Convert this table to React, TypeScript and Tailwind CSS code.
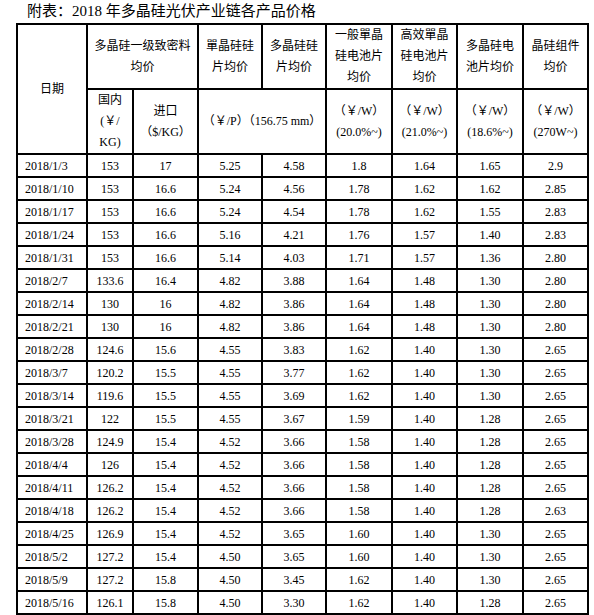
const rows: string[][] = [
  ['2018/1/3', '153', '17', '5.25', '4.58', '1.8', '1.64', '1.65', '2.9'],
  ['2018/1/10', '153', '16.6', '5.24', '4.56', '1.78', '1.62', '1.62', '2.85'],
  ['2018/1/17', '153', '16.6', '5.24', '4.54', '1.78', '1.62', '1.55', '2.83'],
  ['2018/1/24', '153', '16.6', '5.16', '4.21', '1.76', '1.57', '1.40', '2.83'],
  ['2018/1/31', '153', '16.6', '5.14', '4.03', '1.71', '1.57', '1.36', '2.80'],
  ['2018/2/7', '133.6', '16.4', '4.82', '3.88', '1.64', '1.48', '1.30', '2.80'],
  ['2018/2/14', '130', '16', '4.82', '3.86', '1.64', '1.48', '1.30', '2.80'],
  ['2018/2/21', '130', '16', '4.82', '3.86', '1.64', '1.48', '1.30', '2.80'],
  ['2018/2/28', '124.6', '15.6', '4.55', '3.83', '1.62', '1.40', '1.30', '2.65'],
  ['2018/3/7', '120.2', '15.5', '4.55', '3.77', '1.62', '1.40', '1.30', '2.65'],
  ['2018/3/14', '119.6', '15.5', '4.55', '3.69', '1.62', '1.40', '1.30', '2.65'],
  ['2018/3/21', '122', '15.5', '4.55', '3.67', '1.59', '1.40', '1.28', '2.65'],
  ['2018/3/28', '124.9', '15.4', '4.52', '3.66', '1.58', '1.40', '1.28', '2.65'],
  ['2018/4/4', '126', '15.4', '4.52', '3.66', '1.58', '1.40', '1.28', '2.65'],
  ['2018/4/11', '126.2', '15.4', '4.52', '3.66', '1.58', '1.40', '1.28', '2.65'],
  ['2018/4/18', '126.2', '15.4', '4.52', '3.66', '1.58', '1.40', '1.28', '2.63'],
  ['2018/4/25', '126.9', '15.4', '4.52', '3.65', '1.60', '1.40', '1.30', '2.65'],
  ['2018/5/2', '127.2', '15.4', '4.50', '3.65', '1.60', '1.40', '1.30', '2.65'],
  ['2018/5/9', '127.2', '15.8', '4.50', '3.45', '1.62', '1.40', '1.30', '2.65'],
  ['2018/5/16', '126.1', '15.8', '4.50', '3.30', '1.62', '1.40', '1.28', '2.65'],
  // next row is cut off by the bottom edge, only its borders show
  ['', '', '', '', '', '', '', '', ''],
]

const widths = [70, 46, 65, 64, 64, 66, 65, 66, 65]

export default function App() {
  const cell = 'border-2 border-black text-center align-middle p-0'

  return (
    <div className="bg-white text-black font-['Liberation_Serif','Noto_Sans_CJK_SC',serif] h-[615px] overflow-hidden">
      {/* ── Title ── */}
      <div className="h-[23px] pl-[27px] text-[15px] leading-[23px]">
        附表：2018 年多晶硅光伏产业链各产品价格
      </div>

      {/* ── Price table ── */}
      <table className="ml-[16px] border-collapse table-fixed text-[12px] w-[573px]">
        <colgroup>
          {widths.map((w, i) => (
            <col key={i} style={{ width: w }} />
          ))}
        </colgroup>
        <thead>
          <tr className="h-[64px] leading-[21px]">
            <th rowSpan={2} className={`${cell} font-normal`}>日期</th>
            <th colSpan={2} className={`${cell} font-normal`}>多晶硅一级致密料<br />均价</th>
            <th className={`${cell} font-normal`}>單晶硅硅<br />片均价</th>
            <th className={`${cell} font-normal`}>多晶硅硅<br />片均价</th>
            <th className={`${cell} font-normal`}>一般單晶<br />硅电池片<br />均价</th>
            <th className={`${cell} font-normal`}>高效單晶<br />硅电池片<br />均价</th>
            <th className={`${cell} font-normal`}>多晶硅电<br />池片均价</th>
            <th className={`${cell} font-normal`}>晶硅组件<br />均价</th>
          </tr>
          <tr className="h-[64px] leading-[21px]">
            <th className={`${cell} font-normal`}>国内<br />(￥/<br />KG)</th>
            <th className={`${cell} font-normal`}>进口<br />（$/KG）</th>
            <th colSpan={2} className={`${cell} font-normal`}>（￥/P）（156.75 mm）</th>
            <th className={`${cell} font-normal`}>（￥/W）<br />(20.0%~)</th>
            <th className={`${cell} font-normal`}>（￥/W）<br />(21.0%~)</th>
            <th className={`${cell} font-normal`}>（￥/W）<br />(18.6%~)</th>
            <th className={`${cell} font-normal`}>（￥/W）<br />(270W~)</th>
          </tr>
        </thead>
        <tbody>
          {rows.map((r, idx) => (
            <tr key={idx} className="h-[23px] leading-[18px]">
              <td className={`${cell} !text-left pl-[7px]`}>{r[0]}</td>
              {r.slice(1).map((v, i) => (
                <td key={i} className={cell}>{v}</td>
              ))}
            </tr>
          ))}
        </tbody>
      </table>
    </div>
  )
}
